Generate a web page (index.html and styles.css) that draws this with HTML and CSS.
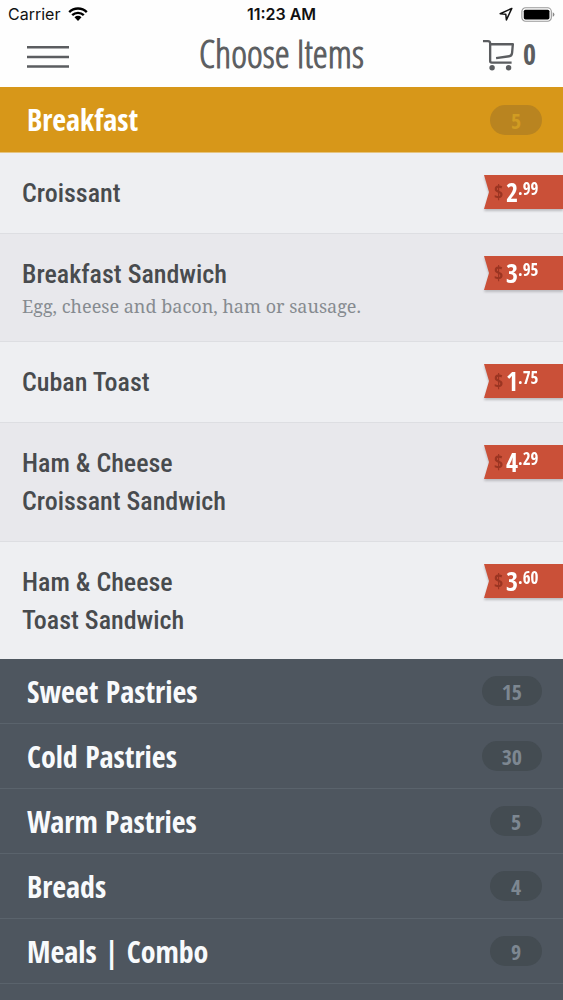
FILE: index.html
```html
<!DOCTYPE html>
<html lang="en">
<head>
<meta charset="utf-8">
<meta name="viewport" content="width=device-width, initial-scale=1">
<title>Choose Items</title>
<link rel="stylesheet" href="styles.css">
</head>
<body>
<header class="top">
  <div class="status">
    <div class="status-left">
      <span>Carrier</span>
      <svg class="wifi" viewBox="0 0 20 14" aria-hidden="true"><g fill="none" stroke="#000" stroke-width="2.4"><path d="M1.2 5.1a12.6 12.6 0 0 1 17.6 0"/><path d="M4.2 8.2a8.3 8.3 0 0 1 11.6 0"/></g><path d="M6.5 10.3a5 5 0 0 1 7 0L10 13.9z"/></svg>
    </div>
    <time class="clock">11:23 AM</time>
    <div class="status-right">
      <svg class="arrow" viewBox="0 0 14 14" aria-hidden="true"><path d="M12.8 1.4 1.2 6.7l5.6.6.6 5.6z" fill="none" stroke="#111" stroke-width="1.5" stroke-linejoin="round"/></svg>
      <svg class="battery" viewBox="0 0 36 16" aria-hidden="true"><rect x=".8" y=".8" width="31.4" height="14.4" rx="4" fill="#fff" stroke="#999" stroke-width="1.2"/><rect x="2.8" y="2.8" width="27.4" height="10.4" rx="1.8"/><path d="M33.7 5.5q1.8.8 1.8 2.5t-1.8 2.5z" fill="#888"/></svg>
    </div>
  </div>
  <div class="nav">
    <button class="menu" type="button" aria-label="Menu"><svg viewBox="0 0 42 24" aria-hidden="true"><path d="M0 2.3h42M0 12h42M0 21.5h42" stroke="#5b5d60" stroke-width="2.5"/></svg></button>
    <h1 class="title">Choose Items</h1>
    <button class="cart" type="button" aria-label="Cart, 0 items">
      <svg viewBox="0 0 34 34" aria-hidden="true"><g fill="none" stroke="#5b5d60" stroke-width="2.4" stroke-linejoin="round"><path d="M1 3.2h5.2q2 0 2.2 2v18.6q0 1.6 1.6 1.6h20.5"/><path d="M8.5 6.4h23.3l-.8 9q-.3 3.2-3 3.4l-13.5 1.9"/></g><g fill="#5b5d60"><circle cx="10.4" cy="30.7" r="2.8"/><circle cx="27.4" cy="30.7" r="2.8"/></g></svg>
      <span>0</span>
    </button>
  </div>
</header>
<main class="menu-list">
  <section>
    <h2><button class="section open" type="button" aria-expanded="true"><span>Breakfast</span><span class="count">5</span></button></h2>
    <ul class="items">
      <li class="item"><div class="info"><h3>Croissant</h3></div><div class="price"><span class="ribbon"><span class="currency">$</span><span class="whole">2</span><span class="cents">.99</span></span></div></li>
      <li class="item"><div class="info"><h3>Breakfast Sandwich</h3><p>Egg, cheese and bacon, ham or sausage.</p></div><div class="price"><span class="ribbon"><span class="currency">$</span><span class="whole">3</span><span class="cents">.95</span></span></div></li>
      <li class="item"><div class="info"><h3>Cuban Toast</h3></div><div class="price"><span class="ribbon"><span class="currency">$</span><span class="whole">1</span><span class="cents">.75</span></span></div></li>
      <li class="item"><div class="info"><h3>Ham &amp; Cheese<br>Croissant Sandwich</h3></div><div class="price"><span class="ribbon"><span class="currency">$</span><span class="whole">4</span><span class="cents">.29</span></span></div></li>
      <li class="item"><div class="info"><h3>Ham &amp; Cheese<br>Toast Sandwich</h3></div><div class="price"><span class="ribbon"><span class="currency">$</span><span class="whole">3</span><span class="cents">.60</span></span></div></li>
    </ul>
  </section>
  <h2><button class="section" type="button"><span>Sweet Pastries</span><span class="count">15</span></button></h2>
  <h2><button class="section" type="button"><span>Cold Pastries</span><span class="count">30</span></button></h2>
  <h2><button class="section" type="button"><span>Warm Pastries</span><span class="count">5</span></button></h2>
  <h2><button class="section" type="button"><span>Breads</span><span class="count">4</span></button></h2>
  <h2><button class="section" type="button"><span>Meals | Combo</span><span class="count">9</span></button></h2>
</main>
</body>
</html>
```
FILE: styles.css
```css
* { box-sizing: border-box; }
html { background: #4e565f; }
body {
  margin: 0;
  color: #484b4e;
  font-family: "Roboto Condensed", Roboto, sans-serif;
}
h1, h2, h3, p, ul { margin: 0; padding: 0; font-weight: inherit; }
ul { list-style: none; }
button { margin: 0; padding: 0; border: 0; background: none; color: inherit; font: inherit; }
svg { display: block; }

.top { height: 87px; background: #fefefe; }
.status {
  display: grid;
  grid-template-columns: 1fr auto 1fr;
  align-items: center;
  height: 28px;
  padding: 0 8px;
  color: #111;
  font: 16px/28px Inter, sans-serif;
}
.status-left, .status-right { display: flex; align-items: center; gap: 8px; }
.status-right { justify-content: flex-end; }
.clock { font-weight: 600; }
.wifi { width: 20px; height: 14px; }
.arrow { width: 14px; height: 14px; }
.battery { width: 34px; height: 15px; }

.nav {
  display: grid;
  grid-template-columns: 1fr auto 1fr;
  align-items: center;
  height: 52px;
  padding: 0 27px;
  color: #5b5d60;
}
.menu { justify-self: start; padding-top: 6px; }
.menu svg { width: 42px; height: 24px; }
.title {
  font-family: "Open Sans Condensed Light", "Roboto Condensed", sans-serif;
  font-size: 38px;
  line-height: 50px;
  padding-bottom: 2px;
  -webkit-text-stroke: 1px currentColor;
}
.cart { display: flex; align-items: center; justify-self: end; gap: 8px; line-height: 52px; }
.cart span {
  font-family: "Open Sans Condensed", "Roboto Condensed", sans-serif;
  font-size: 28px;
}
.cart svg { width: 33px; height: 33px; }

.section {
  display: flex;
  align-items: center;
  justify-content: space-between;
  width: 100%;
  height: 65px;
  padding: 0 21px 0 27px;
  border-bottom: 1px solid #5a636c;
  background: #4e565f;
  color: #f8fafc;
  font-family: "Open Sans Condensed", "Roboto Condensed", sans-serif;
  font-size: 30px;
  font-weight: 800;
  text-align: left;
}
.section.open { height: 66px; border-color: #e6c47f; background: #d79719; color: #fff; }
.count {
  min-width: 52px;
  padding: 0 20px;
  border-radius: 15px;
  background: #444c52;
  color: #7d8791;
  font-size: 22px;
  font-weight: 700;
  line-height: 30px;
  text-align: center;
}
.open .count { background: #b98420; color: #d19c22; }

.item {
  display: flex;
  justify-content: space-between;
  padding: 21px 0 21px 22px;
  border-bottom: 1px solid #dddee2;
  background: #eeeff2;
}
.item:nth-child(even) { background: #e8e8ec; }
.item:last-child { padding-bottom: 20px; border-bottom: 0; }
.item h3 { font-size: 26px; line-height: 38px; font-weight: 500; }
.item p { color: #868b90; font: 18px/27px "Noto Serif", "Liberation Serif", serif; }
.price { flex: none; padding-top: 1px; filter: drop-shadow(0 2px 1px #bcbcc0); }
.ribbon {
  display: flex;
  width: 79px;
  height: 34px;
  padding-left: 10px;
  background: #ca5038;
  clip-path: polygon(0 0, 100% 0, 100% 100%, 0 100%, 5px 50%);
  color: #fff;
  font-family: "Open Sans Condensed", "Roboto Condensed", sans-serif;
  font-weight: 700;
}
.currency { width: 12px; color: #9b3522; font-size: 20px; line-height: 34px; }
.whole { font-size: 26px; line-height: 34px; }
.cents { font-size: 17px; line-height: 28px; }
```
